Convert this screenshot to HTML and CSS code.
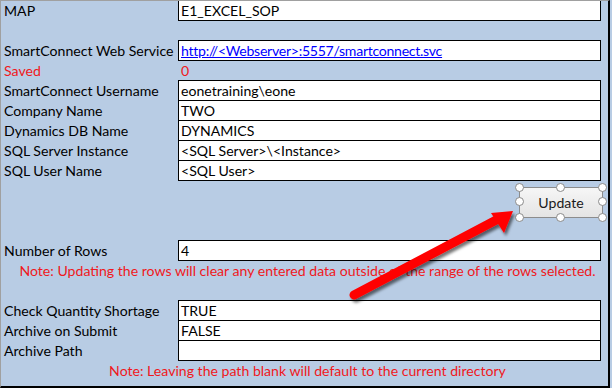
FILE: index.html
```html
<!DOCTYPE html>
<html>
<head>
<meta charset="utf-8">
<link rel="stylesheet" href="styles.css">
</head>
<body>
<div class="sheet">
  <div class="row first"><div class="label">MAP</div><div class="cell">E1_EXCEL_SOP</div></div>
  <div class="row"></div>
  <div class="row"><div class="label">SmartConnect Web Service</div><div class="cell"><span class="link">http://&lt;Webserver&gt;:5557/smartconnect.svc</span></div></div>
  <div class="row red"><div class="label">Saved</div><div class="plain">0</div></div>
  <div class="row"><div class="label">SmartConnect Username</div><div class="cell">eonetraining\eone</div></div>
  <div class="row"><div class="label">Company Name</div><div class="cell">TWO</div></div>
  <div class="row"><div class="label">Dynamics DB Name</div><div class="cell">DYNAMICS</div></div>
  <div class="row"><div class="label">SQL Server Instance</div><div class="cell">&lt;SQL Server&gt;\&lt;Instance&gt;</div></div>
  <div class="row"><div class="label">SQL User Name</div><div class="cell">&lt;SQL User&gt;</div></div>
  <div class="row"></div>
  <div class="row"></div>
  <div class="row"></div>
  <div class="row"><div class="label">Number of Rows</div><div class="cell">4</div></div>
  <div class="row note">Note: Updating the rows will clear any entered data outside of the range of the rows selected.</div>
  <div class="row"></div>
  <div class="row"><div class="label">Check Quantity Shortage</div><div class="cell">TRUE</div></div>
  <div class="row"><div class="label">Archive on Submit</div><div class="cell">FALSE</div></div>
  <div class="row"><div class="label">Archive Path</div><div class="cell"></div></div>
  <div class="row note note2">Note: Leaving the path blank will default to the current directory</div>

  <div class="button">Update
    <span class="h tl"></span><span class="h tm"></span><span class="h tr"></span>
    <span class="h ml"></span><span class="h mr"></span>
    <span class="h bl"></span><span class="h bm"></span><span class="h br"></span>
  </div>

  <svg class="arrow" width="612" height="388" viewBox="0 0 612 388">
    <defs>
      <filter id="sh" x="-20%" y="-20%" width="140%" height="140%">
        <feDropShadow dx="2" dy="3" stdDeviation="1.8" flood-color="#000" flood-opacity="0.55"/>
      </filter>
    </defs>
    <g filter="url(#sh)">
      <line x1="354" y1="295" x2="500" y2="218" stroke="#ff0000" stroke-width="9" stroke-linecap="round"/>
      <polygon points="513,211 491,213 504,233" fill="#ff0000"/>
    </g>
  </svg>
</div>
</body>
</html>
```
FILE: styles.css
```css
html, body {
  margin: 0;
  padding: 0;
  background: #b8cce4;
  width: 612px;
  height: 388px;
  overflow: hidden;
}
.sheet {
  position: relative;
  box-sizing: border-box;
  width: 610px;
  height: 388px;
  background: #b8cce4;
  border-top: 1px solid #a0a0a0;
  border-left: 1px solid #a0a0a0;
  border-right: 2px solid #000;
  border-bottom: 2px solid #000;
  font-family: Lato, "Liberation Sans", sans-serif;
  font-size: 14.1px;
  color: #000;
}
.row {
  display: flex;
  height: 20px;
}
.row.first {
  height: 19px;
}
.label {
  width: 174px;
  padding-left: 3px;
  line-height: 20px;
  padding-top: 1px;
  white-space: nowrap;
}
.first .label {
  line-height: 19px;
  padding-top: 0;
}
.cell {
  box-sizing: border-box;
  width: 423px;
  height: 21px;
  border: 1px solid #000;
  background: #fff;
  padding-left: 2px;
  line-height: 20px;
  white-space: nowrap;
}
.first .cell {
  border-top: none;
  height: 20px;
  line-height: 19px;
}
.plain {
  padding-left: 3px;
  line-height: 20px;
  padding-top: 1px;
}
.red {
  color: #f01820;
}
.link {
  color: #0000ff;
  text-decoration: underline;
  letter-spacing: -0.28px;
}
.note {
  display: block;
  text-align: center;
  color: #f01820;
  line-height: 20px;
  padding-top: 1px;
  box-sizing: border-box;
  padding-left: 6px;
  white-space: nowrap;
}
.button {
  position: absolute;
  left: 518px;
  top: 186px;
  width: 82px;
  height: 29px;
  border: 1px solid #8c8c8c;
  background: linear-gradient(#f6f6f6, #e4e4e4);
  color: #1a1a1a;
  text-align: center;
  line-height: 29px;
  font-family: Lato, "Liberation Sans", sans-serif;
  font-size: 14.1px;
}
.h {
  position: absolute;
  width: 9px;
  height: 9px;
  border: 1.4px solid #8a8a8a;
  border-radius: 50%;
  background: #fff;
  box-sizing: border-box;
}
.tl { left: -5px; top: -5px; }
.tm { left: 36px; top: -5px; }
.tr { right: -5px; top: -5px; }
.ml { left: -5px; top: 9px; }
.mr { right: -5px; top: 9px; }
.bl { left: -5px; bottom: -5px; }
.bm { left: 36px; bottom: -5px; }
.br { right: -5px; bottom: -5px; }
.arrow {
  position: absolute;
  left: -1px;
  top: -1px;
  pointer-events: none;
}
```
